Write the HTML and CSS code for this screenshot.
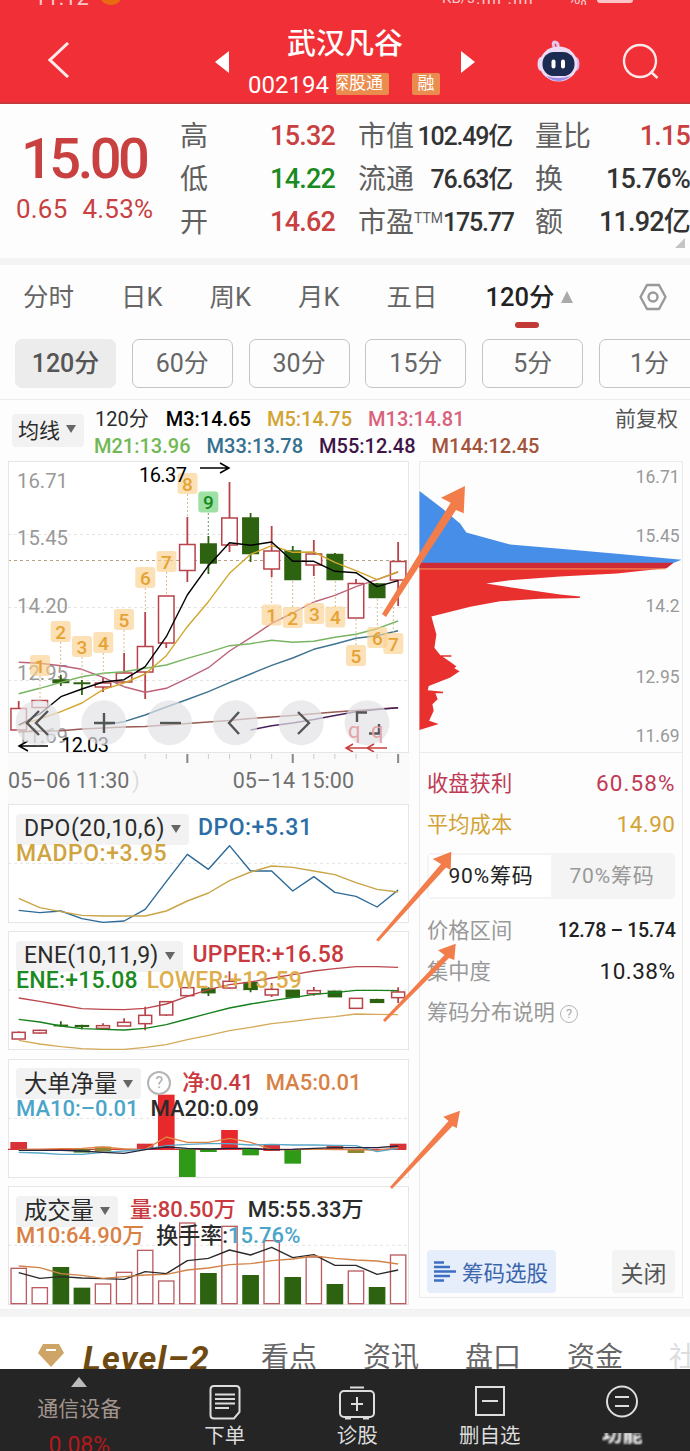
FILE: index.html
```html
<!DOCTYPE html>
<html lang="zh-CN">
<head>
    <meta charset="UTF-8">
    <meta name="viewport" content="width=device-width, initial-scale=1.0">
    <title>武汉凡谷 002194</title>
    <link rel="stylesheet" href="styles.css">
</head>
<body>
    <div class="app">
        <header class="header">
            <div class="status">
                <span class="st-time">11:12</span><i class="st-dot"></i>
                <span class="st-net">KB/s</span><span class="st-sig">.ıııı .ıııı</span><span class="st-wifi">%₀</span><i class="st-bat"></i>
            </div>
            <div class="nav">
                <svg class="back" width="22" height="36" viewBox="0 0 22 36"><path d="M20 1 L2 18 L20 35" fill="none" stroke="#ffe9ea" stroke-width="3"/></svg>
                <svg class="prev" width="14" height="22" viewBox="0 0 14 22"><path d="M14 0 L0 11 L14 22z" fill="#fff"/></svg>
                <div class="title">
                    <h1>武汉凡谷</h1>
                    <div class="code">
                        <span class="num">002194</span>
                        <span class="tag tag-cut"><b>深股通</b></span>
                        <span class="tag">融</span>
                    </div>
                </div>
                <svg class="next" width="14" height="22" viewBox="0 0 14 22"><path d="M0 0 L14 11 L0 22z" fill="#fff"/></svg>
                <svg class="robot" width="44" height="42" viewBox="0 0 44 42">
                    <path d="M17 7 Q15 2 18 2 Q22 3 21 8" fill="none" stroke="#e6c6ee" stroke-width="3"/>
                    <ellipse cx="4" cy="24" rx="3.500" ry="7" fill="#e9d4f3"/>
                    <ellipse cx="39" cy="24" rx="3.500" ry="7" fill="#d9b4e6"/>
                    <ellipse cx="21.500" cy="24" rx="19" ry="17.500" fill="#ecdcf6"/>
                    <path d="M9 36 Q21 46 34 36 Q21 40 9 36" fill="#9a8fe8"/>
                    <rect x="5.500" y="12" width="32" height="24" rx="11.500" fill="#1b2b52"/>
                    <rect x="14.500" y="19.500" width="4" height="9" rx="2" fill="#fff"/>
                    <rect x="24" y="19.500" width="4" height="9" rx="2" fill="#fff"/>
                </svg>
                <svg class="search" width="38" height="38" viewBox="0 0 38 38"><circle cx="18" cy="18" r="16" fill="none" stroke="#ffe9ea" stroke-width="2.400"/><path d="M28.500 28.500 L35.500 35" stroke="#ffe9ea" stroke-width="2.400"/></svg>
            </div>
        </header>

        <section class="quote">
            <div class="price">
                <div class="last">15.00</div>
                <div class="chg"><span>0.65</span><span>4.53%</span></div>
            </div>
            <dl class="q q1">
                <div><dt>高</dt><dd class="red">15.32</dd></div>
                <div><dt>低</dt><dd class="green">14.22</dd></div>
                <div><dt>开</dt><dd class="red">14.62</dd></div>
            </dl>
            <dl class="q q2">
                <div><dt>市值</dt><dd>102.49亿</dd></div>
                <div><dt>流通</dt><dd>76.63亿</dd></div>
                <div><dt>市盈<sup>TTM</sup></dt><dd>175.77</dd></div>
            </dl>
            <dl class="q q3">
                <div><dt>量比</dt><dd class="red">1.15</dd></div>
                <div><dt>换</dt><dd>15.76%</dd></div>
                <div><dt>额</dt><dd>11.92亿</dd></div>
            </dl>
            <i class="corner"></i>
        </section>

        <nav class="tabs">
            <span>分时</span><span>日K</span><span>周K</span><span>月K</span><span>五日</span>
            <span class="active">120分</span>
            <svg class="up" width="12" height="12" viewBox="0 0 12 12"><path d="M6 0 L12 12 H0z" fill="#aaa"/></svg>
            <svg class="gear" width="28" height="28" viewBox="0 0 28 28" fill="none" stroke="#999" stroke-width="2.400"><path d="M8 2 H20 L26.500 14 L20 26 H8 L1.500 14z" stroke-linejoin="round"/><circle cx="14" cy="14" r="4.500"/></svg>
        </nav>
        <div class="pills">
            <span class="on">120分</span><span>60分</span><span>30分</span><span>15分</span><span>5分</span><span>1分</span>
        </div>

        <div class="ma">
            <div class="sel">均线<i class="down"></i></div>
            <div class="ma-list">
                <div><span class="dark m-first">120分</span><span class="black">M3:14.65</span><span class="gold">M5:14.75</span><span class="pink">M13:14.81</span></div>
                <div><span class="lime">M21:13.96</span><span class="blue">M33:13.78</span><span class="purple">M55:12.48</span><span class="brown">M144:12.45</span></div>
            </div>
            <div class="fq">前复权</div>
        </div>

        <main class="main">
            <div class="left">
                <svg id="kline" class="box kline" viewBox="8 461 401 292"></svg>
                <div class="axis">
                    <svg id="ticks" width="401" height="10" viewBox="8 0 401 10"></svg>
                    <div class="dates"><span>05–06 11:30<em>)</em></span><span>05–14 15:00</span></div>
                </div>
                <div class="box sub">
                    <svg id="dpo" viewBox="24 12 1203 357"></svg>
                    <div class="legend wide">
                        <div><span class="sel">DPO(20,10,6)<i class="down"></i></span><span class="dpo">DPO:+5.31</span></div>
                        <div><span class="gold2">MADPO:+3.95</span></div>
                    </div>
                </div>
                <div class="box sub">
                    <svg id="ene" viewBox="24 19 1203 357"></svg>
                    <div class="legend">
                        <div><span class="sel">ENE(10,11,9)<i class="down"></i></span><span class="red2">UPPER:+16.58</span></div>
                        <div><span class="green">ENE:+15.08</span><span class="lower">LOWER:+13.59</span></div>
                    </div>
                </div>
                <div class="box sub">
                    <svg id="net" viewBox="24 12 1203 357"></svg>
                    <div class="legend cn">
                        <div><span class="sel">大单净量<i class="down"></i></span><span class="help">?</span><span class="red2">净:0.41</span><span class="orange">MA5:0.01</span></div>
                        <div><span class="sky">MA10:–0.01</span><span class="dark">MA20:0.09</span></div>
                    </div>
                </div>
                <div class="box sub">
                    <svg id="vol" viewBox="24 393 1203 357"></svg>
                    <div class="legend cn">
                        <div><span class="sel">成交量<i class="down"></i></span><span class="red2">量:80.50万</span><span class="dark">M5:55.33万</span></div>
                        <div><span class="orange">M10:64.90万</span><span class="dark">换手率:<b class="sky">15.76%</b></span></div>
                    </div>
                </div>
            </div>

            <aside class="chips">
                <svg class="dist" viewBox="419 461 264 292">
                    <path fill="#468ee8" d="M419 491 L441.700 508.300 L460 524 L466 532.700 L510 544.700 L560 549 L617 554 L682 560 L673 563.500 H419z"/>
                    <path fill="#e8302f" d="M419 563.500 H673 L666 568.700 L617 574 L560 577 L510 580.700 L486 584 L520 589.300 L560 595 L580 597 V598.500 L540 599.300 L500 601.700 L470 607.300 L431 617 L436 635 L434 648.300 L440 656 H451 V657.500 H442.300 L449 662 L456 667 L454 669 L459.300 672 L450 678.300 L428.300 686.700 L427.300 691 L442.700 692.500 V694 H435 L437.300 700 L432 705 L433.300 711.700 L428.700 721.700 L438.300 725 L419 731z"/>
                    <path fill="#cf2b36" d="M419 563 H674 L667 568.500 H419z"/>
                    <path stroke="#f2a05c" d="M419 569.300 H666"/>
                    <g class="dist-label" text-anchor="end">
                        <text x="680" y="483">16.71</text>
                        <text x="680" y="542">15.45</text>
                        <text x="680" y="613">14.2</text>
                        <text x="680" y="684">12.95</text>
                        <text x="680" y="743">11.69</text>
                    </g>
                </svg>
                <div class="info">
                    <div class="row rose"><span>收盘获利</span><b>60.58%</b></div>
                    <div class="row amber"><span>平均成本</span><b>14.90</b></div>
                    <div class="switch"><span class="on">90%筹码</span><span>70%筹码</span></div>
                    <div class="row small"><span>价格区间</span><b>12.78 – 15.74</b></div>
                    <div class="row"><span>集中度</span><b>10.38%</b></div>
                    <div class="row"><span>筹码分布说明 <i class="help">?</i></span></div>
                </div>
                <div class="actions">
                    <button class="pick"><svg width="22" height="22" viewBox="0 0 22 22" stroke="#3c6fc4" stroke-width="2.600"><path d="M0 1.500H10M0 6H16M0 10.500H22M0 15H16M0 19.500H10"/></svg>筹码选股</button>
                    <button class="close">关闭</button>
                </div>
            </aside>

            <!-- hand drawn marks over the charts -->
            <svg class="marks" viewBox="0 461 690 849" fill="#f27d4b">
                <path d="M382 614 L450.700 502.700 L441 497.700 L465 486 L463.700 513.300 L456 510 L386 617z"/>
                <path d="M376 940 L441 864 L432.700 859 L451.300 851.700 L450.700 870 L446 867.500 L378.500 941.500z"/>
                <path d="M383 1020 L444.500 955 L438 950.300 L455.700 943.700 L454.300 960 L449 958 L385 1022z"/>
                <path d="M390 1187 L448.500 1121 L443.300 1116.700 L460 1110.700 L456.700 1128 L452.500 1126 L392 1189z"/>
            </svg>
        </main>

        <div class="level">
            <svg width="26" height="23" viewBox="0 0 26 23"><path d="M5 0 H21 L26 9 L13 23 L0 9z" fill="#cfa467"/><path d="M8 6 H18" stroke="#fff" stroke-width="2"/></svg>
            <span class="lv">Level–2</span><span>看点</span><span>资讯</span><span>盘口</span><span>资金</span><span class="fade">社</span>
        </div>

        <footer class="bottom">
            <div class="item idx">
                <svg width="16" height="10" viewBox="0 0 16 10"><path d="M8 0 L16 10 H0z" fill="#bbb"/></svg>
                <span>通信设备</span><b>0.08%</b>
            </div>
            <div class="item">
                <svg width="32" height="36" viewBox="0 0 32 36" fill="none" stroke="#ddd" stroke-width="2"><path d="M5 2 H27 Q30.500 2 30.500 5.500 V28 L25 34.500 H5 Q1.500 34.500 1.500 31 V5.500 Q1.500 2 5 2z M6 10.500H26M6 15H26M6 19.500H26M6 24H20"/></svg>
                <span>下单</span>
            </div>
            <div class="item">
                <svg width="36" height="36" viewBox="0 0 36 36" fill="none" stroke="#ddd" stroke-width="2"><rect x="1" y="7" width="34" height="26" rx="4"/><path d="M11 3.500 H25 M18 13 V27 M12 20 H24 M6 34.500 H12 M24 34.500 H30"/></svg>
                <span>诊股</span>
            </div>
            <div class="item">
                <svg width="30" height="36" viewBox="0 0 30 36" fill="none" stroke="#ddd" stroke-width="2"><rect x="1" y="3" width="28" height="28"/><path d="M7 17 H23"/></svg>
                <span>删自选</span>
            </div>
            <div class="item more">
                <svg width="34" height="36" viewBox="0 0 34 36" fill="none" stroke="#ddd" stroke-width="2"><circle cx="17" cy="17.500" r="15"/><path d="M10 13 H24 M10 22 H24"/></svg>
                <span>功能</span>
            </div>
        </footer>
    </div>
    <script src="script.js"></script>
</body>
</html>
```
FILE: styles.css
```css
* {
    box-sizing: border-box;
}
body {
    margin: 0;
    background: #fdfdfd;
    font-family: Roboto, "Noto Sans CJK SC", sans-serif;
    color: #333;
}
h1, dl, dd {
    margin: 0;
    font-weight: normal;
}
b, em, i {
    font-weight: inherit;
    font-style: normal;
}
svg {
    display: block;
    flex: none;
}
.app {
    width: 690px;
    height: 1451px;
    overflow: hidden;
    white-space: nowrap;
}
.red { color: #c8403f; }
.red2 { color: #c93a40; }
.green { color: #1c8a22; }
.dark { color: #2b2b2b; }
.black { color: #000; }
.gold { color: #d2a432; }
.gold2 { color: #d0a440; }
.pink { color: #d8627c; }
.lime { color: #72b855; }
.blue { color: #35708f; }
.purple { color: #401448; }
.brown { color: #a2543c; }
.dpo { color: #2b6ea6; }
.lower { color: #dfae4c; }
.orange { color: #d98145; }
.sky { color: #4ba5c9; }

/* header */
.header {
    height: 104px;
    background: #f03036;
    border-bottom: 2px solid #c83a3e;
    color: #fff;
}
.status {
    height: 5px;
    overflow: hidden;
    display: flex;
    align-items: flex-end;
    font-size: 17px;
    line-height: 14px;
    color: #fbc5c7;
    padding-left: 34px;
}
.st-time { width: 66px; font-size: 22px; }
.st-dot {
    width: 22px;
    height: 20px;
    border-radius: 10px;
    background: #e96a10;
    flex: none;
}
.st-net { margin-left: 320px; width: 34px; font-size: 15px; }
.st-sig { width: 92px; letter-spacing: 1px; }
.st-wifi { width: 29px; }
.st-bat {
    width: 36px;
    height: 16px;
    border-radius: 3px;
    background: #fbc5c7;
    margin-bottom: 2px;
}
.nav {
    display: flex;
    padding-left: 48px;
}
.back { margin-top: 37px; }
.prev { margin: 46px 0 0 145px; }
.title {
    width: 232px;
    padding-top: 21px;
    text-align: center;
}
.title h1 {
    font-size: 29px;
    line-height: 36px;
    font-weight: 500;
}
.code {
    display: flex;
    align-items: center;
    padding: 2px 0 0 19px;
    line-height: 28px;
}
.code .num {
    font-size: 24px;
    width: 88px;
    padding-top: 7px;
    text-align: left;
}
.tag {
    background: #ea8c4e;
    width: 28px;
    height: 22px;
    margin-top: 5px;
    line-height: 21px;
    font-size: 17px;
    border-radius: 2px;
    margin-left: 23px;
    overflow: hidden;
}
.tag-cut {
    width: 53px;
    margin-left: 0;
    display: flex;
}
.tag-cut b { margin-left: -4px; }
.next { margin-top: 46px; }
.robot { margin: 35px 0 0 62px; }
.search { margin: 38px 0 0 41px; }

/* quote */
.quote {
    height: 161px;
    display: flex;
    border-bottom: 7px solid #f4f4f4;
    position: relative;
}
.price {
    width: 180px;
    padding: 29px 0 0 16px;
    color: #c8403f;
}
.last {
    font-size: 56px;
    line-height: 53px;
    font-weight: 500;
    letter-spacing: -3.500px;
    padding-left: 5px;
}
.chg {
    display: flex;
    gap: 15px;
    font-size: 26px;
    line-height: 46px;
    letter-spacing: 0.2px;
}
.q {
    font-size: 28px;
    line-height: 43px;
    padding-top: 11px;
}
.q div {
    display: flex;
    justify-content: space-between;
    height: 43px;
}
.q dt { color: #606060; }
.q dd {
    font-size: 27px;
    font-weight: 500;
    letter-spacing: -0.8px;
}
.q1 { width: 155px; }
.q2 { width: 154px; margin-left: 23px; }
.q2 dd { font-size: 25px; letter-spacing: -1.200px; }
.q2 sup {
    font-size: 14px;
    line-height: 10px;
    vertical-align: 9px;
}
.q3 { width: 155px; margin-left: 23px; }
.corner {
    position: absolute;
    right: 5px;
    bottom: 10px;
    border: 5px solid transparent;
    border-right-color: #c4c4c4;
    border-bottom-color: #c4c4c4;
}

/* period tabs */
.tabs {
    display: flex;
    align-items: center;
    height: 74px;
    padding: 0 0 10px 23px;
    gap: 47px;
    font-size: 25.500px;
    line-height: 40px;
    color: #666;
}
.tabs .active {
    color: #222;
    font-weight: 500;
    position: relative;
    left: 1px;
}
.tabs .active::after {
    content: "";
    position: absolute;
    left: 29px;
    bottom: -11px;
    width: 24px;
    height: 6px;
    border-radius: 3px;
    background: #c23a36;
}
.tabs .up { margin-left: -40px; }
.tabs .gear { margin-left: 19px; }
.pills {
    display: flex;
    gap: 15.800px;
    padding-left: 15px;
    height: 61px;
    border-bottom: 1px solid #ececec;
}
.pills span {
    flex: none;
    width: 101px;
    height: 49px;
    border: 1px solid #c4c4c4;
    border-radius: 7px;
    font-size: 25px;
    line-height: 47px;
    text-align: center;
    color: #666;
}
.pills .on {
    background: #ececec;
    border-color: #ececec;
    color: #555;
    font-weight: 500;
}

/* moving average legend */
.ma {
    height: 61px;
    display: flex;
    padding: 6px 12px 0;
}
.sel {
    background: #f2f2f2;
    border-radius: 4px;
    color: #2b2b2b;
    display: flex;
    align-items: center;
}
.down {
    border: 5.500px solid transparent;
    border-top: 8px solid #666;
    border-bottom: 0;
    margin-left: 6px;
}
.ma .sel {
    width: 72px;
    height: 33px;
    margin-top: 8px;
    padding: 0 0 3px 6px;
    font-size: 21px;
}
.ma-list {
    padding-left: 10px;
    font-size: 20px;
    line-height: 27px;
    font-weight: 500;
    flex: 1;
}
.ma-list div {
    display: flex;
    gap: 16px;
}
.m-first {
    font-weight: 400;
    margin: 0 1px;
}
.fq {
    font-size: 21px;
    line-height: 27px;
    color: #555;
}

/* charts */
.main {
    display: flex;
    gap: 10px;
    padding: 0 8px;
    height: 849px;
    border-bottom: 1px solid #f0f0f0;
    position: relative;
}
.left { width: 401px; }
.kline { width: 401px; height: 292px; }
.box {
    outline: 1px solid #e6e6e6;
    outline-offset: -1px;
    background: #fff;
}
.axis {
    height: 51px;
    background: #fafafa;
}
.dates {
    display: flex;
    justify-content: space-between;
    padding-right: 55px;
    font-size: 21.500px;
    line-height: 35px;
    color: #707070;
}
.dates em { color: #ddd; margin-left: 3px; }
.sub {
    height: 119px;
    margin-bottom: 8.400px;
    position: relative;
}
.sub svg {
    position: absolute;
    left: 0;
    top: 0;
    width: 401px;
    height: 119px;
}
.legend {
    position: relative;
    padding: 11px 0 0 8px;
    font-size: 23px;
    font-weight: 500;
    line-height: 22px;
    letter-spacing: 0.200px;
}
.legend div {
    display: flex;
    gap: 12px;
    height: 26px;
    align-items: center;
}
.wide { letter-spacing: 0.500px; }
.legend .sel {
    height: 31px;
    margin-bottom: -2px;
    padding: 0 8px 0 8px;
    font-weight: 400;
}
.legend .dpo { margin-left: -3px; }
.legend .red2 { margin-left: -2px; }
.legend .lower { margin-left: -3px; }
.cn {
    font-size: 22px;
    letter-spacing: 0;
}
.cn .sel { font-size: 23.300px; }
.cn .help { margin: 0 1px 0 -6px; }
.cn .sel + .red2 { margin-left: 0; }
.help {
    display: inline-block;
    width: 24px;
    height: 24px;
    border: 2px solid #b5b5b5;
    border-radius: 50%;
    color: #aaa;
    font-size: 16px;
    line-height: 20px;
    text-align: center;
    font-weight: 400;
}
svg text {
    font-family: Roboto, sans-serif;
}
.ylab { fill: #999; font-size: 21px; }
.mark { fill: #000; font-size: 20px; }
.badge { font-size: 19px; font-weight: 500; text-anchor: middle; }

/* chip distribution */
.chips {
    width: 264px;
    height: 837px;
    border: 1px solid #ebebeb;
    display: flex;
    flex-direction: column;
}
.dist {
    width: 264px;
    height: 292px;
    margin: -1px;
    border-bottom: 1px solid #ebebeb;
}
.dist-label { fill: #999; font-size: 17.500px; }
.info {
    padding: 11px 7px 0;
    flex: 1;
}
.row {
    display: flex;
    justify-content: space-between;
    font-size: 21.300px;
    line-height: 41px;
    height: 41px;
    color: #999;
}
.row b {
    color: #222;
    font-size: 22.500px;
    letter-spacing: 0.500px;
    margin-right: -0.500px;
}
.row.small b {
    font-size: 19.500px;
    font-weight: 500;
    letter-spacing: -0.300px;
}
.row.rose b { letter-spacing: 1.100px; }
.row.rose, .row.rose b { color: #c03a55; }
.row.amber, .row.amber b { color: #d3a336; }
.row .help {
    width: 18px;
    height: 18px;
    border-width: 1.500px;
    font-size: 13px;
    line-height: 15px;
    vertical-align: 2px;
}
.switch {
    display: flex;
    height: 46px;
    margin: 8px 0 11px;
    padding: 2px;
    background: #f4f4f4;
    border-radius: 5px;
    font-size: 21px;
    line-height: 42px;
    letter-spacing: 0.800px;
    text-align: center;
    color: #999;
}
.switch span { flex: 1; }
.switch .on {
    flex: none;
    width: 122px;
    background: #fff;
    color: #222;
    padding-left: 2px;
}
.actions {
    display: flex;
    justify-content: space-between;
    padding: 0 7px 4px;
}
button {
    border: none;
    border-radius: 4px;
    height: 43px;
    font-family: inherit;
    font-size: 22px;
    padding: 0;
}
.pick {
    width: 129px;
    background: #e6edfb;
    color: #3a66ad;
    display: flex;
    align-items: center;
    gap: 6px;
    padding-left: 7px;
    font-size: 21.500px;
}
.close {
    width: 63px;
    background: #f4f4f4;
    color: #555;
    font-size: 23px;
}
.marks {
    position: absolute;
    left: 0;
    top: 0;
    width: 690px;
    height: 849px;
}

/* bottom */
.level {
    height: 59px;
    border-top: 7px solid #f4f4f4;
    background: #fff;
    display: flex;
    gap: 46px;
    padding: 22px 0 0 38px;
    font-size: 28px;
    line-height: 38px;
    color: #666;
    overflow: hidden;
}
.level svg { margin: 5px -27px 0 0; }
.level span { flex: none; }
.lv {
    font-size: 34px;
    font-weight: 700;
    font-style: italic;
    color: #6e4a12;
    width: 132px;
    letter-spacing: 1.200px;
}
.level .fade { color: #ddd; }
.bottom {
    height: 82px;
    background: #252525;
    display: flex;
    padding-left: 13px;
    color: #ddd;
}
.item {
    width: 132.500px;
    display: flex;
    flex-direction: column;
    align-items: center;
    padding-top: 15px;
    font-size: 20.500px;
    line-height: 33px;
}
.item.idx {
    color: #a3958d;
    padding-top: 8px;
    line-height: 44px;
    font-size: 21px;
    margin-right: 13px;
}
.item.idx b {
    color: #b5191c;
    line-height: 30px;
    font-size: 23px;
}
.more span {
    color: #fff;
    font-weight: 700;
    filter: blur(1px);
    height: 24px;
    margin-top: 5px;
    line-height: 20px;
    clip-path: inset(8px 0 4px 0);
}
```
FILE: script.js
```js
const xs = i => 18.7 + 21.08 * i;
const RED = '#b8434a', GREEN = '#2d6310';

function line(ys, color, scale, start = 0, w = 1.4) {
    const pts = ys.map((y, i) => (xs(i + start) * scale).toFixed(1) + ',' + y).join(' ');
    return `<polyline points="${pts}" fill="none" stroke="${color}" stroke-width="${w * scale}" stroke-linejoin="round"/>`;
}
function dash(y, x1, x2, color, scale) {
    return `<path d="M${x1} ${y}H${x2}" stroke="${color}" stroke-width="${scale}" stroke-dasharray="${3 * scale} ${3 * scale}"/>`;
}
// [up, top, bottom, high, low]
function candle(c, i, scale, width) {
    const x = xs(i) * scale, w = width * scale, col = c[0] ? RED : GREEN;
    let s = `<path d="M${x} ${c[3]}V${c[1]}M${x} ${c[2]}V${c[4]}" stroke="${col}" stroke-width="${1.8 * scale}"/>`;
    s += `<rect x="${x - w / 2}" y="${c[1]}" width="${w}" height="${c[2] - c[1]}" fill="${c[0] ? '#fff' : col}" stroke="${col}" stroke-width="${1.5 * scale}"/>`;
    return s;
}

// K line
const k = [
    [1, 708.5, 730, 701, 730], [1, 700.5, 707.5, 700, 708], [0, 680, 682.5, 675, 686], [0, 683, 683.5, 680, 695],
    [1, 683, 687, 677, 692], [1, 673, 682, 653, 683], [1, 646.5, 672, 612, 699], [1, 596, 643, 596, 648],
    [1, 544.5, 570.5, 517, 582], [0, 544, 563, 536, 574], [1, 518, 545, 482, 552], [0, 518, 553.5, 513, 562],
    [1, 551, 569, 526, 577], [0, 551, 579.5, 546, 580], [1, 554, 565, 540, 576], [0, 554.5, 579.5, 553, 580],
    [1, 583.5, 618, 579, 618], [0, 584, 597.5, 583, 598], [1, 561.5, 580, 542, 606]
];
// [text, x, y, dotted line from, to]
const badges = [
    [1, 40, 666, 676, 699], [2, 60.7, 632, 642, 675], [3, 82, 647, 657, 680], [4, 103.3, 643, 653, 677], [5, 124, 620, 630, 653],
    [6, 145.3, 578, 588, 612], [7, 166.5, 562, 572, 595], [8, 187.5, 484, 494, 517], [9, 208.3, 502.5, 513, 536],
    [1, 271.7, 615.5, 577, 605], [2, 292.7, 618, 581, 608], [3, 314.3, 614, 577, 604], [4, 335.3, 617.5, 581, 608],
    [5, 356, 656, 619, 646], [6, 377.3, 638, 599, 628], [7, 393.3, 644, 607, 634]
];
let s = '';
[534.5, 607.5, 680.5].forEach(y => s += dash(y, 8, 409, '#e4e4e4', 1));
s += dash(560.5, 8, 409, '#b9a084', 1);
[['16.71', 488], ['15.45', 545], ['14.20', 612.5], ['12.95', 679.5], ['11.69', 743]].forEach(l =>
    s += `<text class="ylab" x="17" y="${l[1]}" textLength="51" lengthAdjust="spacingAndGlyphs">${l[0]}</text>`);
k.forEach((c, i) => s += candle(c, i, 1, 15.5));
s += line([662.3, 663.3, 665.7, 669.3, 677.3, 686.7, 692.3, 688.3, 678.3, 667.7, 651, 637.7, 623.3, 613, 602, 595.3, 586.7, 579.7, 572], '#bd6378', 1);
s += line([693.7, 688.3, 682.3, 676.7, 673.3, 671.7, 668.3, 665, 658.3, 652.3, 645.7, 643.7, 640.3, 642.3, 641.3, 637.3, 634.3, 628.7, 621], '#78b560', 1);
s += line([725, 721.7, 715, 707, 699.5, 691.7, 682.7, 674, 665.3, 658, 649.3, 644, 638.3, 635.7, 630.7], '#3f7390', 1, 4);
s += line([732, 731, 730.7, 729, 728, 727, 726.5, 725, 723.5, 722, 720.5, 718.5, 717, 715.5, 713.8, 712, 710.5, 709, 707.7], '#985a52', 1);
s += line([730, 725.7, 723, 719.5, 715.5, 711.7, 709.5, 707.7], '#47205c', 1, 11);
s += line([725, 719, 711.7, 703, 689.7, 683, 674, 655.7, 626.7, 601.7, 573.3, 554.3, 545.7, 552.3, 552, 562.3, 570.7, 579.7, 571.7], '#d0a72e', 1);
s += line([725, 714, 696.7, 689, 682, 679.7, 666.7, 636.7, 595, 565.7, 542.7, 545.3, 542, 561.3, 561.3, 571.3, 572.7, 586.7, 580.7], '#000', 1);
badges.forEach(b => {
    const g = b[0] === 9;
    s += `<path d="M${b[1]} ${b[3]}V${b[4]}" stroke="${g ? '#6a9a6a' : '#d8bd97'}" stroke-dasharray="2 2"/>`;
    s += `<rect x="${b[1] - 10}" y="${b[2] - 11}" width="20" height="21" rx="3" fill="${g ? '#8edc95' : '#fbd08f'}" fill-opacity="${g ? .85 : .65}"/>`;
    s += `<text class="badge" x="${b[1]}" y="${b[2] + 6.5}" fill="${g ? '#168a20' : '#e6a233'}">${b[0]}</text>`;
});
s += '<text class="mark" x="139" y="481.5" textLength="48">16.37</text><path d="M200 468H228M220 463L229 468L220 473" fill="none" stroke="#000" stroke-width="1.5"/>';
s += '<text class="mark" x="61" y="752" textLength="48">12.03</text><path d="M48 746H19M28 741L19 746L28 751" fill="none" stroke="#000" stroke-width="1.5"/>';
// toolbar buttons
const icons = ['M39 711L27 723L39 735M48 711L36 723L48 735', 'M104 713V733M94 723H115', 'M160 723H181',
    'M239 712L229 723L239 734', 'M298 712L309 723L298 734', 'M357 722V712.5H367M379 724V733.5H369'];
icons.forEach((d, i) => {
    s += `<circle cx="${38 + 65.8 * i}" cy="722.8" r="22.5" fill="#e2e2e6" fill-opacity=".7"/>`;
    s += `<path d="${d}" fill="none" stroke="#555" stroke-width="2.4"/>`;
});
s += '<g fill="#e4a4a6" font-size="22"><text x="348" y="738">q</text><text x="371" y="738">q</text></g>';
s += '<path d="M346 748H387M353 744L346 748L353 752M374 744L367 748L374 752" fill="none" stroke="#c8403f" stroke-width="1.5"/>';
document.getElementById('kline').innerHTML = s;

s = '';
for (let i = 6; i < 19; i++) {
    const big = [8, 13, 18].includes(i);
    s += `<path d="M${xs(i)} 1V${big ? 10 : 6}" stroke="${big ? '#888' : '#ccc'}" stroke-width="${big ? 2 : 1}"/>`;
}
document.getElementById('ticks').innerHTML = s;

// DPO
s = dash(190, 24, 1226, '#e4e4e4', 3);
s += line([331, 338, 333, 356, 367, 363, 328, 245, 163, 208, 137, 213, 213, 273, 230, 277, 289, 321, 270], '#2d6a98', 3);
s += line([295, 323, 335, 346, 348, 348, 348, 333, 303, 279, 242, 216, 198, 202, 213, 224, 248, 268, 276], '#c9a548', 3);
document.getElementById('dpo').innerHTML = s;

// ENE
const e = [
    [1, 323, 343, 320, 343], [1, 317, 325, 315, 327], [0, 302, 303, 290, 306], [0, 303, 305, 300, 314], [1, 303, 311, 296, 316],
    [1, 293, 304, 281, 304], [1, 272, 297, 246, 317], [1, 231, 271, 229, 274], [1, 189, 213, 187, 213], [0, 193, 204, 188, 214],
    [1, 170, 190, 140, 192], [0, 174, 194, 170, 203], [1, 194, 211, 175, 217], [0, 197, 217, 196, 219], [1, 198, 207, 187, 213],
    [0, 200, 216, 198, 217], [1, 221, 251, 220, 252], [0, 225, 233, 222, 234], [1, 202, 219, 188, 235]
];
s = dash(196, 24, 1226, '#e4e4e4', 3);
e.forEach((c, i) => s += candle(c, i, 3, 13));
s += line([220, 230, 241, 252, 254, 255, 251, 238, 215, 195, 180, 172, 160, 150, 139, 132, 126, 126, 128], '#bd474c', 3);
s += line([284, 292, 304, 312, 314, 316, 311, 300, 283, 266, 250, 238, 228, 219, 209, 204, 197, 197, 198], '#16801c', 3);
s += line([347, 358, 366, 372, 374, 374, 368, 360, 345, 332, 318, 308, 297, 290, 282, 276, 268, 269, 270], '#d5aa5a', 3);
document.getElementById('ene').innerHTML = s;

// net big orders: [index, top, bottom, color]
const net = [
    [0, 261, 284, '#d83337'], [3, 283, 293, '#4f8a2a'], [4, 275, 290, '#8f8433'], [6, 266, 283, '#d83337'], [7, 119, 283, '#e8292c'],
    [8, 283, 366, '#2f9a18'], [9, 283, 291, '#2f9a18'], [10, 225, 283, '#e8292c'], [11, 280, 301, '#2f9a18'], [12, 268, 288, '#d83337'],
    [13, 283, 326, '#2f9a18'], [15, 272, 283, '#b84b3a'], [16, 283, 294, '#8f8433'], [18, 266, 284, '#d83337']
];
s = dash(190, 24, 1226, '#e4e4e4', 3) + '<path d="M24 283H1218" stroke="#d83337" stroke-width="4"/>';
net.forEach(b => s += `<rect x="${xs(b[0]) * 3 - 25}" y="${b[1]}" width="50" height="${b[2] - b[1]}" fill="${b[3]}"/>`);
s += line([284, 283, 281, 280, 276, 282, 284, 246, 262, 262, 250, 262, 284, 284, 282, 284, 284, 286, 278], '#e08444', 3);
s += line([292, 294, 298, 298, 292, 288, 283, 272, 268, 266, 266, 270, 268, 270, 270, 271, 272, 290, 280], '#58a6c8', 3);
s += line([286, 286, 286, 288, 292, 295, 284, 276, 280, 282, 280, 280, 284, 283, 280, 278, 278, 278, 273], '#222640', 3);
document.getElementById('net').innerHTML = s;

// volume
const v = [[1, 638], [1, 696], [0, 636], [0, 698], [1, 685], [1, 650], [1, 584], [1, 676], [1, 502], [0, 654], [1, 512], [0, 660],
    [1, 555], [0, 666], [1, 604], [0, 687], [1, 646], [0, 696], [1, 598]];
s = dash(571, 24, 1226, '#e4e4e4', 3);
v.forEach((b, i) => s += `<rect x="${xs(i) * 3 - 23}" y="${b[1] + 2}" width="46" height="${744 - b[1]}" fill="${b[0] ? '#fff' : GREEN}" stroke="${b[0] ? '#bb5c61' : GREEN}" stroke-width="4"/>`);
s += line([653, 670, 665, 669, 671, 673, 650, 656, 617, 610, 585, 600, 577, 608, 599, 631, 631, 658, 645], '#2b2b2b', 3);
s += line([633, 638, 656, 661, 670, 665, 660, 658, 645, 639, 629, 626, 617, 612, 603, 610, 615, 618, 627], '#d28348', 3);
document.getElementById('vol').innerHTML = s;
```
